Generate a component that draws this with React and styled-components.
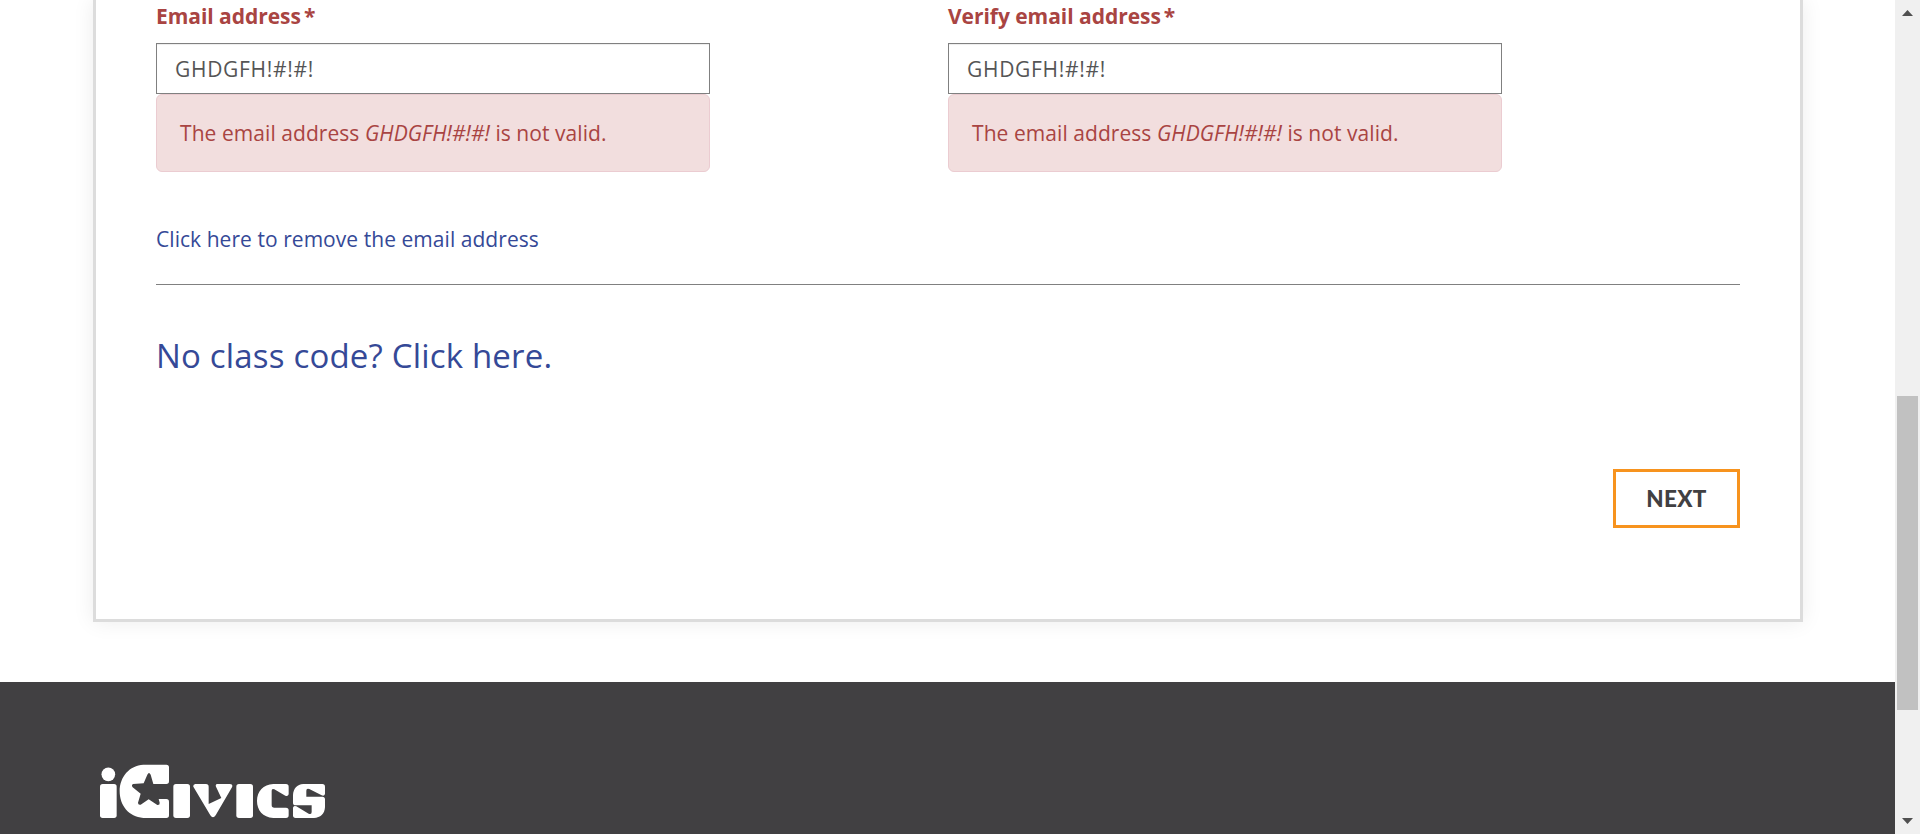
import React from 'react';
import styled, { createGlobalStyle } from 'styled-components';

const GlobalStyle = createGlobalStyle`
  * { box-sizing: border-box; }
  html, body { margin: 0; padding: 0; overflow: hidden; background: #fff; }
  body { font-family: "Open Sans", "Noto Sans", sans-serif; font-size: 21px; line-height: 30px; }
`;

const Viewport = styled.div`
  display: flex;
  width: 100%;
  height: 834px;
  overflow: hidden;
`;

const Page = styled.div`
  flex: 1;
  display: flex;
  flex-direction: column;
  min-width: 0;
`;

const CardArea = styled.main`
  height: 682px;
  padding: 0 92px 60px 93px;
  flex: none;
`;

const Card = styled.section`
  height: 622px;
  padding: 0 60px;
  background: #fff;
  border: 3px solid #dcdcdc;
  border-top: 0;
  box-shadow: 0 0 20px rgba(0, 0, 0, 0.08);
  display: flex;
  flex-direction: column;
`;

const Fields = styled.div`
  display: grid;
  grid-template-columns: 1fr 1fr;
`;

const Field = styled.div`
  width: 70%;
  display: flex;
  flex-direction: column;
`;

const Label = styled.label`
  height: 43px;
  padding-top: 1px;
  color: #a94442;
  font-weight: 700;
  letter-spacing: -0.04px;
  white-space: nowrap;
`;

const Required = styled.span`
  margin-left: 3px;
`;

const Input = styled.input`
  height: 51px;
  padding: 0 18px;
  border: 1px solid #808080;
  border-radius: 0;
  outline: 0;
  background: #fff;
  box-shadow: inset 0 1px 1px rgba(0, 0, 0, 0.075);
  color: #555;
  font: inherit;
  letter-spacing: 0.7px;
`;

const Alert = styled.div`
  height: 78px;
  padding: 23px;
  background: #f2dede;
  border: 1px solid #ebccd1;
  border-radius: 6px;
  color: #a94442;
  letter-spacing: 0.06px;
  white-space: nowrap;
`;

const RemoveRow = styled.div`
  height: 113px;
  padding-top: 52px;
  border-bottom: 1px solid #808080;
`;

const Link = styled.a`
  color: #354997;
  text-decoration: none;
  font-size: ${(p) => (p.$large ? '33px' : '21px')};
  letter-spacing: ${(p) => (p.$large ? '0.18px' : '0.05px')};
  white-space: nowrap;
`;

const CodeRow = styled.div`
  height: 184px;
  padding-top: 48px;
  line-height: 46px;
`;

const Actions = styled.div`
  display: flex;
  justify-content: flex-end;
`;

const Button = styled.button`
  width: 127px;
  height: 59px;
  padding: 1px 0 0;
  background: #fff;
  border: 3px solid #f7931e;
  color: #414042;
  font: 900 22.5px/30px Lato, sans-serif;
  letter-spacing: 0.3px;
`;

const Footer = styled.footer`
  flex: 1;
  padding: 82px 0 0 100px;
  background: #414042;
`;

const Logo = styled.svg`
  display: block;
  width: 226.67px;
  height: 55px;
  fill: #fff;
`;

const Scrollbar = styled.div`
  width: 25px;
  flex: none;
  display: flex;
  flex-direction: column;
  align-items: center;
  background: #f0f0f0;
`;

const Arrow = styled.svg`
  display: block;
  width: 11px;
  height: 6px;
  margin: ${(p) => (p.$down ? '108px 0 0' : '10px 0 0')};
  fill: #505050;
`;

const Thumb = styled.div`
  width: 21px;
  height: 314px;
  margin-top: 380px;
  background: #c1c1c1;
`;

function EmailField({ id, label, value }) {
  return (
    <Field>
      <Label htmlFor={id}>{label}<Required>*</Required></Label>
      <Input id={id} defaultValue={value} spellCheck={false} />
      <Alert>The email address <em>{value}</em> is not valid.</Alert>
    </Field>
  );
}

export default function App() {
  return (
    <Viewport>
      <GlobalStyle />
      <Page>
        <CardArea>
          <Card>
            <Fields>
              <EmailField id="email" label="Email address" value="GHDGFH!#!#!" />
              <EmailField id="verify" label="Verify email address" value="GHDGFH!#!#!" />
            </Fields>
            <RemoveRow><Link href="#">Click here to remove the email address</Link></RemoveRow>
            <CodeRow><Link href="#" $large>No class code? Click here.</Link></CodeRow>
            <Actions><Button type="button">NEXT</Button></Actions>
          </Card>
        </CardArea>
        <Footer>
          <Logo viewBox="60 42 680 165" role="img" aria-label="iCivics">
            <circle cx="85" cy="73" r="20.5" />
            <rect x="60" y="102" width="50" height="102" rx="8" />
            <path fillRule="evenodd" d="M190 44H259Q267 44 267 52V94Q267 102 259 102H220L212 74Q207 64 202 74L191 100L159 102Q153 106 158 112L182 131L174 158Q174 166 182 164L206 148L232 165Q240 166 239 158L236 147H259Q267 147 267 155V196Q267 204 259 204H190C146 201 119 166 119 124C119 80 149 46 190 44Z" />
            <rect x="280" y="102" width="50" height="102" rx="8" />
            <path d="M346 102H378Q386 102 386 110V162L424 144L408 110Q405 102 413 102H450Q460 103 456 112L407 196Q399 208 391 196L341 112Q337 104 346 102Z" />
            <rect x="469" y="102" width="50" height="102" rx="8" />
            <path d="M580 102H618Q626 102 626 110V133Q624 140 616 137L583 118Q575 115 575 122V165Q575 173 583 173H618Q626 173 626 181V196Q626 204 618 204H580C548 202 531 180 531 153C531 124 550 104 580 102Z" />
            <path d="M670 102H727Q735 102 735 110V132Q733 139 725 136L688 117Q679 114 679 122V140H727Q735 140 735 148V172C734 192 721 203 702 204H647Q639 204 639 196V173Q641 165 649 169L686 191Q695 195 695 186V166H647Q639 166 639 158V136C640 115 651 103 670 102Z" />
          </Logo>
        </Footer>
      </Page>
      <Scrollbar>
        <Arrow viewBox="0 0 11 6"><path d="M5.5 0 11 6H0z" /></Arrow>
        <Thumb />
        <Arrow $down viewBox="0 0 11 6"><path d="M0 0H11L5.5 6z" /></Arrow>
      </Scrollbar>
    </Viewport>
  );
}
